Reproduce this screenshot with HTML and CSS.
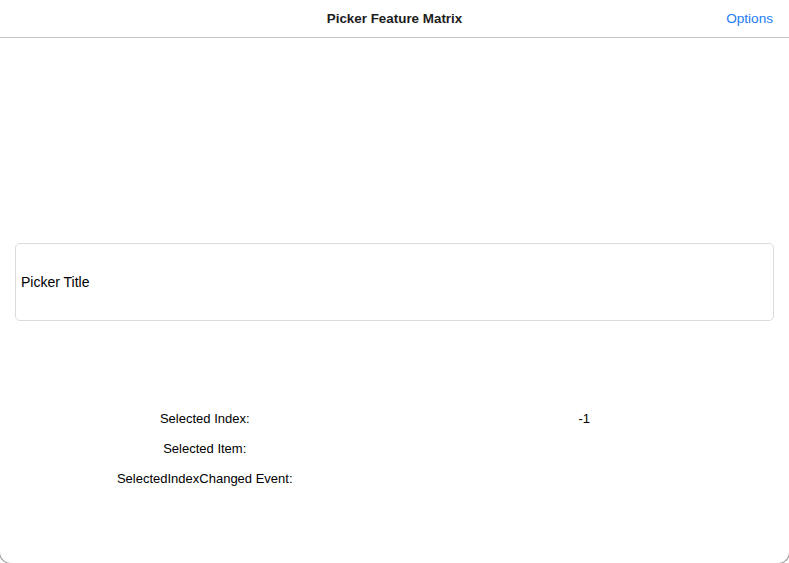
FILE: index.html
```html
<!DOCTYPE html>
<html>
<head>
<meta charset="utf-8">
<link rel="stylesheet" href="styles.css">
</head>
<body>
<div class="window">
  <header class="navbar">
    <div class="nav-title">Picker Feature Matrix</div>
    <div class="nav-action">Options</div>
  </header>
  <main class="content">
    <div class="picker">Picker Title</div>
    <div class="grid">
      <div class="cell">Selected Index:</div>
      <div class="cell">-1</div>
      <div class="cell">Selected Item:</div>
      <div class="cell"></div>
      <div class="cell">SelectedIndexChanged Event:</div>
      <div class="cell"></div>
    </div>
  </main>
</div>
</body>
</html>
```
FILE: styles.css
```css
html, body {
  margin: 0;
  padding: 0;
  background: #ffffff;
  overflow: hidden;
}
body {
  font-family: "Liberation Sans", Arial, sans-serif;
  font-size: 13px;
  color: #000;
}
.window {
  box-sizing: border-box;
  height: 564px;
  margin: 0 -1px;
  border: 1px solid #9a9a9a;
  border-top: none;
  border-radius: 0 0 12px 12px;
  overflow: hidden;
}
.navbar {
  height: 37px;
  border-bottom: 1px solid #c8c8c8;
  display: grid;
  grid-template-columns: 1fr auto 1fr;
  align-items: center;
  padding: 0 16px;
}
.nav-title {
  grid-column: 2;
  font-weight: bold;
  font-size: 13.4px;
  color: #1c1c1c;
}
.nav-action {
  grid-column: 3;
  justify-self: end;
  color: #1a7cf5;
  font-size: 13.6px;
}
.content {
  padding: 205px 15px 0;
}
.picker {
  height: 76px;
  border: 1px solid #dcdcdc;
  border-radius: 5px;
  display: flex;
  align-items: center;
  padding-left: 5px;
  font-size: 14px;
}
.grid {
  margin-top: 82px;
  display: grid;
  grid-template-columns: 1fr 1fr;
  grid-auto-rows: 30px;
}
.cell {
  display: flex;
  align-items: center;
  justify-content: center;
}
```
